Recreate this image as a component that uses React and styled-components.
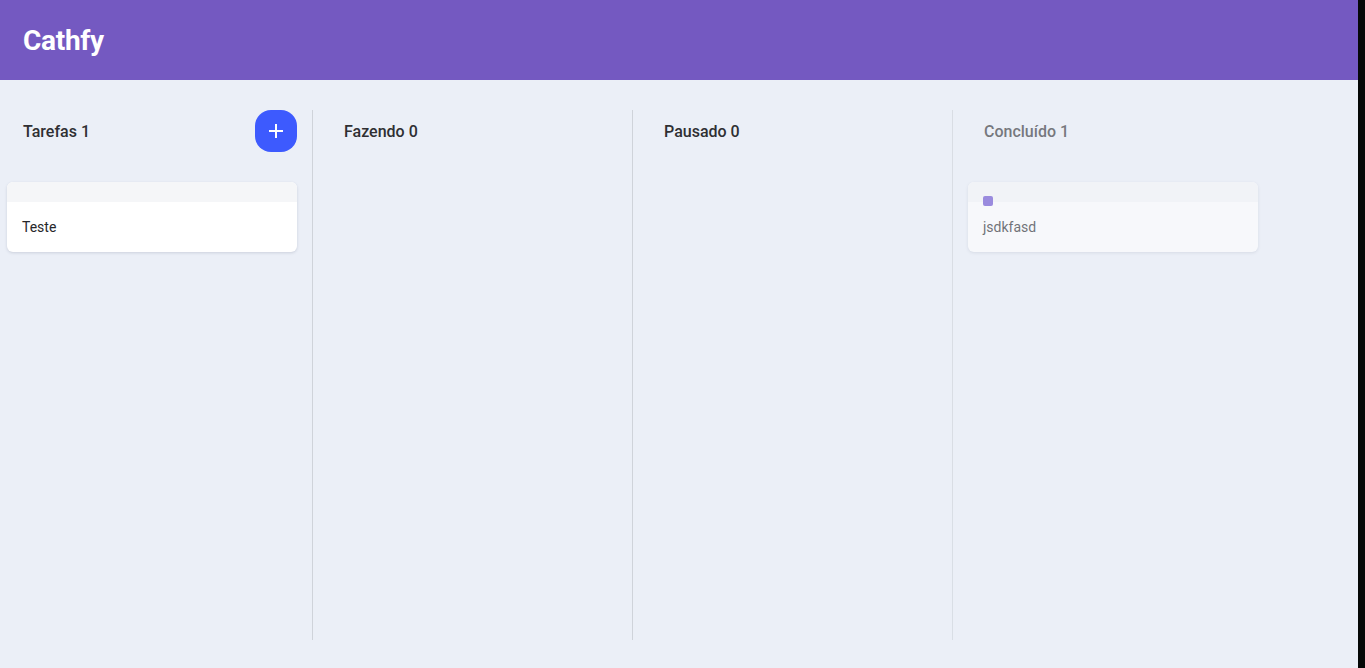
import React from "react";
import styled, { createGlobalStyle } from "styled-components";

const GlobalStyle = createGlobalStyle`
  html, body {
    margin: 0;
    padding: 0;
    background: #050807;
    font-family: Roboto, "Noto Sans", Arial, sans-serif;
  }
`;

const StyledPage = styled.div`
  width: 1358px;
  height: 668px;
  background: #ebeff7;
  display: flex;
  flex-direction: column;
`;

const StyledTopBar = styled.header`
  height: 80px;
  background: #7459c1;
  display: flex;
  align-items: center;
  padding-left: 23px;
  box-sizing: border-box;
  .logo {
    margin: 0;
    color: #ffffff;
    font-size: 28px;
    font-weight: 700;
    letter-spacing: -0.3px;
  }
`;

const StyledBoard = styled.main`
  display: flex;
  padding-top: 30px;
`;

const StyledColumn = styled.section`
  box-sizing: border-box;
  width: ${({ first }) => (first ? "312px" : "320px")};
  height: 530px;
  padding: 0 15px 0 ${({ first }) => (first ? "7px" : "15px")};
  border-left: ${({ first }) => (first ? "none" : "1px solid #cfd3da")};
  display: flex;
  flex-direction: column;
  opacity: ${({ done }) => (done ? 0.62 : 1)};
`;

const StyledColumnHeader = styled.div`
  height: 42px;
  display: flex;
  align-items: center;
  justify-content: space-between;
  padding-left: 16px;
  margin-bottom: 30px;
  .title {
    font-size: 16px;
    font-weight: 500;
    color: #2f2f33;
  }
`;

const StyledAddButton = styled.button`
  width: 42px;
  height: 42px;
  border: none;
  border-radius: 16px;
  background: #3d5afe;
  display: flex;
  align-items: center;
  justify-content: center;
  padding: 0;
  cursor: pointer;
`;

const StyledCard = styled.div`
  width: 290px;
  height: 70px;
  border-radius: 6px;
  background: #ffffff;
  box-shadow: 0 1px 3px rgba(60, 70, 100, 0.18);
  overflow: hidden;
  display: flex;
  flex-direction: column;
  .card-top {
    height: 20px;
    background: #f5f6f8;
    display: flex;
    align-items: flex-end;
    padding-left: 15px;
  }
  .card-body {
    flex: 1;
    display: flex;
    align-items: center;
    padding-left: 15px;
    font-size: 14px;
    color: #26262a;
  }
`;

const StyledTag = styled.span`
  display: block;
  width: 10px;
  height: 10px;
  border-radius: 2px;
  background: ${({ color }) => color};
  margin-bottom: -4px;
`;

const columns = [
  { title: "Tarefas", cards: [{ text: "Teste" }], add: true },
  { title: "Fazendo", cards: [] },
  { title: "Pausado", cards: [] },
  { title: "Concluído", cards: [{ text: "jsdkfasd", tag: "#6a4fd0" }], done: true },
];

const App = () => {
  return (
    <>
      <GlobalStyle />
      <StyledPage>
        <StyledTopBar>
          <h1 className="logo">Cathfy</h1>
        </StyledTopBar>
        <StyledBoard>
          {columns.map((col, i) => (
            <StyledColumn key={col.title} first={i === 0} done={col.done}>
              <StyledColumnHeader>
                <span className="title">
                  {col.title} {col.cards.length}
                </span>
                {col.add && (
                  <StyledAddButton aria-label="Adicionar">
                    <svg width="18" height="18" viewBox="0 0 18 18">
                      <path
                        d="M9 2v14M2 9h14"
                        stroke="#ffffff"
                        strokeWidth="2"
                      />
                    </svg>
                  </StyledAddButton>
                )}
              </StyledColumnHeader>
              {col.cards.map((card) => (
                <StyledCard key={card.text}>
                  <div className="card-top">
                    {card.tag && <StyledTag color={card.tag} />}
                  </div>
                  <div className="card-body">{card.text}</div>
                </StyledCard>
              ))}
            </StyledColumn>
          ))}
        </StyledBoard>
      </StyledPage>
    </>
  );
};

export default App;
